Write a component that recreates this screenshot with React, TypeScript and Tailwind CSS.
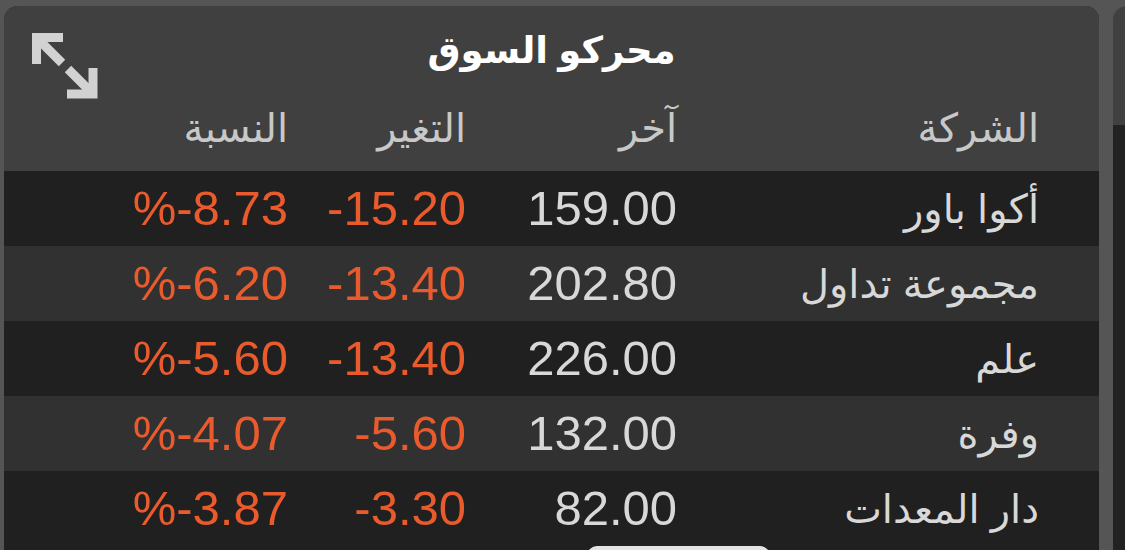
import React from 'react';

const rows = [
    { name: 'أكوا باور', last: '159.00', change: '-15.20', pct: '%-8.73' },
    { name: 'مجموعة تداول', last: '202.80', change: '-13.40', pct: '%-6.20' },
    { name: 'علم', last: '226.00', change: '-13.40', pct: '%-5.60' },
    { name: 'وفرة', last: '132.00', change: '-5.60', pct: '%-4.07' },
    { name: 'دار المعدات', last: '82.00', change: '-3.30', pct: '%-3.87' },
];

const font = { fontFamily: '"Liberation Sans", "DejaVu Sans", sans-serif' };

function ExpandIcon() {
    return (
        <svg width="66" height="66" viewBox="0 0 66 66" fill="none" stroke="#d2d2d2" strokeWidth="9">
            <path d="M4.5 31 V4.5 H31" strokeLinejoin="miter" />
            <path d="M6 6 L30 30" />
            <path d="M61 35 V61 H35" strokeLinejoin="miter" />
            <path d="M60 60 L36 36" />
        </svg>
    );
}

export default function App() {
    return (
        <div className="relative w-[1125px] h-[550px] overflow-hidden bg-[#555555] flex gap-[14px] pl-[4px] pt-[6px]" style={font}>
            {/* main panel */}
            <div className="w-[1095px] shrink-0 rounded-t-[14px] overflow-hidden bg-[#202020] flex flex-col">
                <div className="bg-[#404040] h-[165px] relative flex flex-col">
                    <div className="absolute left-[28px] top-[27px]">
                        <ExpandIcon />
                    </div>
                    <div className="h-[88px] flex items-center justify-center">
                        <span className="text-white font-bold text-[37px] leading-none">محركو السوق</span>
                    </div>
                    <div className="grid grid-cols-[284px_178px_211px_362px] pr-[60px] mt-[14px] text-[#c8c8c8] text-[40px] leading-none">
                        <div className="text-right">النسبة</div>
                        <div className="text-right">التغير</div>
                        <div className="text-right">آخر</div>
                        <div className="text-right">الشركة</div>
                    </div>
                </div>
                {rows.map((r, i) => (
                    <div
                        key={r.name}
                        className={`grid grid-cols-[284px_178px_211px_362px] pr-[60px] h-[75px] items-center ${i % 2 === 0 ? 'bg-[#202020]' : 'bg-[#313131]'}`}
                    >
                        <div className="text-right text-[49px] leading-none text-[#e95b2d]">{r.pct}</div>
                        <div className="text-right text-[49px] leading-none text-[#e95b2d]">{r.change}</div>
                        <div className="text-right text-[49px] leading-none text-[#d8d8d8]">{r.last}</div>
                        <div className="text-right text-[40px] leading-none text-[#d8d8d8]">{r.name}</div>
                    </div>
                ))}
            </div>
            {/* neighbour panel, cut off */}
            <div className="w-[40px] shrink-0 rounded-tl-[14px] overflow-hidden flex flex-col">
                <div className="h-[119px] bg-[#404040]" />
                <div className="flex-1 bg-[#222222]" />
            </div>
            <div className="absolute left-[587px] top-[546px] w-[183px] h-[20px] rounded-full bg-[#e4e4e4]" />
        </div>
    );
}
